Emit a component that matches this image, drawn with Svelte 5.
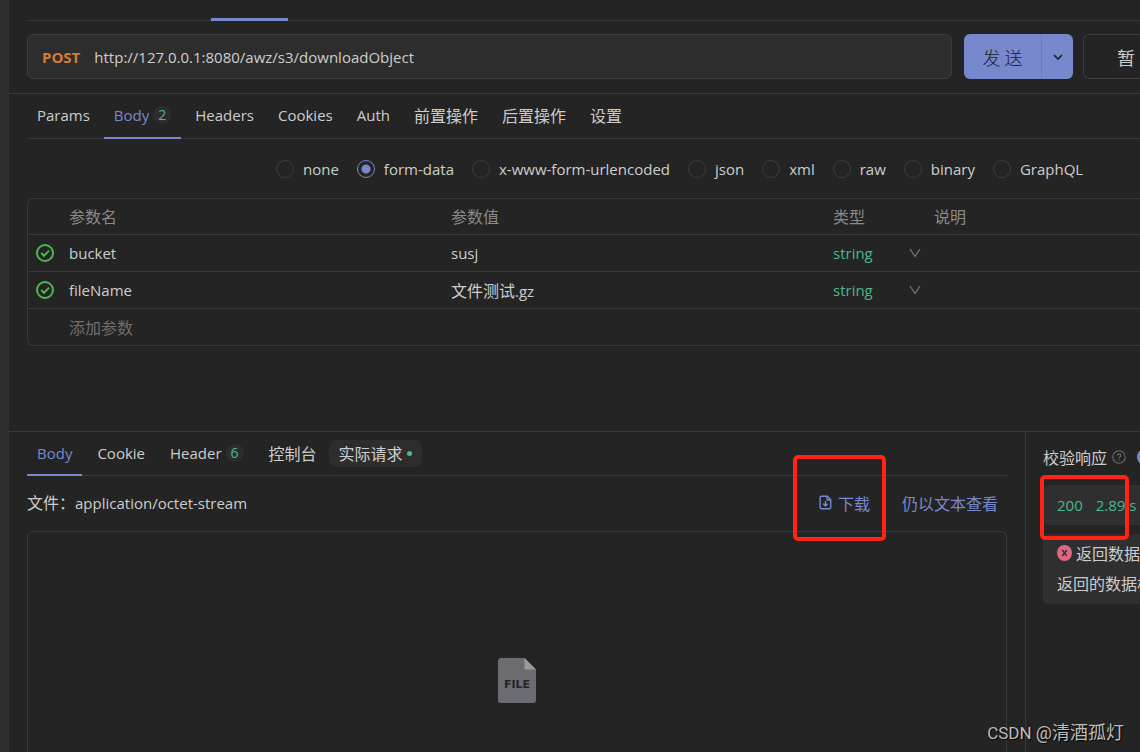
<script>
  const requestTabs = [
    { label: 'Params' },
    { label: 'Body', count: 2, active: true },
    { label: 'Headers' },
    { label: 'Cookies' },
    { label: 'Auth' },
    { label: '前置操作', han: true },
    { label: '后置操作', han: true },
    { label: '设置', han: true }
  ];
  const bodyTypes = ['none', 'form-data', 'x-www-form-urlencoded', 'json', 'xml', 'raw', 'binary', 'GraphQL'];
  let bodyType = $state('form-data');
  let url = $state('http://127.0.0.1:8080/awz/s3/downloadObject');
  const params = [
    { name: 'bucket', value: 'susj' },
    { name: 'fileName', han: '文件测试', value: '.gz' }
  ];
</script>

<div class="app">
  <div class="rail"></div>
  <main>
    <div class="doc-tabs"><span class="doc-active"></span></div>

    <form class="url-row" onsubmit={(e) => e.preventDefault()}>
      <label class="url-box">
        <b>POST</b>
        <input type="text" aria-label="URL" bind:value={url} />
      </label>
      <div class="actions">
        <div class="send">
          <button type="submit" class="send-main">发 送</button>
          <button type="button" class="send-more" aria-label="更多">
            <svg width="12" height="12" viewBox="0 0 12 12"><path d="M2 4l4 4 4-4" fill="none" stroke="currentColor" stroke-width="1.6" /></svg>
          </button>
        </div>
        <button type="button" class="stash">暂</button>
      </div>
    </form>

    <section class="request">
      <nav class="tabs">
        {#each requestTabs as tab}
          <button type="button" class="tab" class:active={tab.active} class:han={tab.han}>
            {tab.label}{#if tab.count}<span class="count">{tab.count}</span>{/if}
          </button>
        {/each}
      </nav>

      <div class="types">
        {#each bodyTypes as type}
          <label><input type="radio" name="body-type" value={type} bind:group={bodyType} />{type}</label>
        {/each}
      </div>

      <table>
        <thead>
          <tr>
            <th class="c-check"></th>
            <th class="c-wide">参数名</th>
            <th class="c-wide">参数值</th>
            <th class="c-type">类型</th>
            <th>说明</th>
          </tr>
        </thead>
        <tbody>
          {#each params as p}
            <tr>
              <td class="c-check">
                <svg width="18" height="18" viewBox="0 0 18 18" fill="none" stroke="#4fb552" stroke-width="2">
                  <circle cx="9" cy="9" r="8" />
                  <path d="M5.2 9l2.8 2.8 5-5.2" />
                </svg>
              </td>
              <td>{p.name}</td>
              <td>{#if p.han}<span class="han">{p.han}</span>{/if}{p.value}</td>
              <td>
                <div class="type">
                  <select aria-label="类型"><option>string</option></select>
                  <svg width="12" height="10" viewBox="0 0 12 10"><path d="M1 1l5 7.5L11 1" fill="none" stroke="#777" stroke-width="1.2" /></svg>
                </div>
              </td>
              <td></td>
            </tr>
          {/each}
          <tr>
            <td class="c-check"></td>
            <td colspan="4"><input class="add" type="text" aria-label="添加参数" placeholder="添加参数" /></td>
          </tr>
        </tbody>
      </table>
    </section>

    <div class="response">
      <section class="result">
        <nav class="tabs">
          <button type="button" class="tab active">Body</button>
          <button type="button" class="tab">Cookie</button>
          <button type="button" class="tab">Header<span class="count">6</span></button>
          <button type="button" class="tab han">控制台</button>
          <button type="button" class="tab han pill"><span>实际请求<i></i></span></button>
        </nav>
        <div class="file-row">
          <p><span class="han">文件：</span>application/octet-stream</p>
          <button type="button" class="link">
            <svg width="13" height="15" viewBox="0 0 14 16" fill="none" stroke="currentColor" stroke-width="1.5" stroke-linejoin="round">
              <path d="M3 1.2h6l3.7 3.9v7.9q0 1.8-1.8 1.8H3q-1.8 0-1.8-1.8V3Q1.200 1.200 3 1.200z" />
              <path d="M8.700 1.400v3.900h3.800" />
              <path d="M7 6.500v5M4.600 9.400L7 11.800l2.400-2.400" />
            </svg>下载
          </button>
          <button type="button" class="link">仍以文本查看</button>
        </div>
        <div class="preview">
          <svg width="38" height="46" viewBox="0 0 38 46">
            <path d="M3 0h23.500L38 11.500V42q0 3-3 3H3q-3 0-3-3V3Q0 0 3 0z" fill="#6b6c72" />
            <path d="M26.500 0L38 11.500H26.500z" fill="#9a9ba0" />
            <text x="19" y="30" text-anchor="middle">FILE</text>
          </svg>
        </div>
      </section>

      <aside>
        <div class="check-head">
          <span>校验响应</span>
          <svg width="14" height="14" viewBox="0 0 14 14" fill="none" stroke="#6a6a6a" stroke-width="1.1">
            <circle cx="7" cy="7" r="6.200" />
            <path d="M5.200 5.600c0-2.300 3.600-2.300 3.600 0 0 1.300-1.800 1.300-1.800 2.700M7 9.400v1.200" />
          </svg>
          <button type="button" class="switch" role="switch" aria-checked="true" aria-label="校验响应"></button>
        </div>
        <div class="card stats"><span>200</span><span>2.89 s</span></div>
        <div class="card notice">
          <p>
            <svg width="15" height="16" viewBox="0 0 15 16"><ellipse cx="7.500" cy="8" rx="7.500" ry="8" fill="#e06682" /><path d="M5.200 5l4.600 6M9.800 5l-4.600 6" stroke="#2d2d2d" stroke-width="1.300" /></svg>
            返回数据
          </p>
          <p>返回的数据格</p>
        </div>
      </aside>
    </div>
  </main>

  <div class="mark mark-download"></div>
  <div class="mark mark-status"></div>
  <div class="watermark">CSDN <span>@清酒孤灯</span></div>
</div>

<style>
  :global(body) { background: #242424; }
  .app {
    --line: #383838;
    --accent: #7788cc;
    --green: #48b98c;
    position: relative;
    display: flex;
    height: 100vh;
    overflow: hidden;
    background: #242424;
    color: #cdcdcd;
    font: 15px/24px "Open Sans", "Noto Sans CJK SC", sans-serif;
  }
  .app * { box-sizing: border-box; }
  button, input, select { font: inherit; color: inherit; background: none; border: 0; padding: 0; margin: 0; outline: none; }
  button { cursor: pointer; }
  p { margin: 0; }
  svg { display: block; flex: none; }
  .han, th, .add, .link, aside, .stash { font-family: "Noto Sans CJK SC", sans-serif; font-size: 16px; }

  .rail { flex: none; width: 9px; background: #2d2d2d; border-right: 1px solid #303030; }
  main { flex: 1; min-width: 0; display: flex; flex-direction: column; }

  .doc-tabs { flex: none; height: 21px; margin-left: 18px; padding-left: 184px; border-bottom: 1px solid var(--line); display: flex; align-items: flex-end; }
  .doc-active { width: 77px; height: 3px; margin-bottom: -1px; background: var(--accent); }

  .url-row { flex: none; display: flex; gap: 12px; padding: 13px 0 14px 18px; border-bottom: 1px solid var(--line); }
  .url-box { flex: 1; height: 45px; display: flex; align-items: center; gap: 14px; padding: 0 14px; background: #2d2d2d; border: 1px solid #3c3c3c; border-radius: 6px; }
  .url-box b { color: #d47b36; }
  .url-box input { flex: 1; min-width: 0; }
  .actions { display: flex; gap: 10px; }
  .send { display: flex; background: var(--accent); border-radius: 6px; color: #1e2130; }
  .send-main { width: 78px; font-size: 18px; font-family: "Noto Sans CJK SC", sans-serif; font-weight: 300; border-right: 1px solid #6b7bbd; }
  .send-more { width: 31px; display: flex; align-items: center; justify-content: center; }
  .stash { width: 57px; padding-left: 33px; text-align: left; font-size: 18px; border: 1px solid #3c3c3c; border-right: 0; border-radius: 6px 0 0 6px; }

  .request { flex: none; height: 337px; padding-left: 18px; }
  .tabs { display: flex; height: 45px; gap: 4px; border-bottom: 1px solid var(--line); }
  .tab { display: flex; align-items: center; height: 45px; padding: 0 10px 1px; border-bottom: 2px solid transparent; white-space: nowrap; }
  .request .tab { padding-bottom: 2px; }
  .tab.active { color: var(--accent); border-bottom-color: var(--accent); }
  .count { width: 18px; height: 18px; margin-left: 4px; border-radius: 9px; background: #2d2d2d; color: var(--green); font-size: 14px; line-height: 18px; text-align: center; }
  .tab.pill { padding: 0; margin-left: -3px; }
  .pill span { display: flex; align-items: center; gap: 4px; height: 27px; padding: 0 10px; border-radius: 8px; background: #2d2d2d; }
  .pill i { width: 5px; height: 5px; border-radius: 50%; background: var(--green); }

  .types { display: flex; gap: 18px; height: 59px; padding-left: 249px; align-items: center; white-space: nowrap; }
  .types label { display: flex; align-items: center; gap: 9px; }
  .types input { appearance: none; width: 18px; height: 18px; border: 1px solid #3c3c3c; border-radius: 50%; }
  .types input:checked { border-color: var(--accent); background: radial-gradient(circle, var(--accent) 4px, transparent 5px); }

  table { width: 100%; table-layout: fixed; border-collapse: separate; border-spacing: 0; border: 1px solid var(--line); border-right: 0; border-radius: 6px 0 0 6px; }
  th, td { height: 37px; padding: 0; text-align: left; border-bottom: 1px solid var(--line); }
  th { height: 36px; padding-bottom: 2px; font-weight: 400; color: #8a8a8a; }
  tbody tr:last-child td { border-bottom: 0; height: 36px; }
  .c-check { width: 41px; padding-left: 8px; }
  .c-wide { width: 382px; }
  .c-type { width: 101px; }
  .type { display: flex; align-items: center; }
  .type select { appearance: none; width: 76px; color: var(--green); }
  .add { display: block; }
  .add::placeholder { color: #6e6e6e; opacity: 1; }

  .response { flex: 1; min-height: 0; display: flex; border-top: 1px solid var(--line); }
  .result { flex: 1; min-width: 0; display: flex; flex-direction: column; padding: 0 18px; }
  .result .tabs { flex: none; height: 44px; gap: 5px; }
  .result .tab { height: 44px; padding-bottom: 0; }
  .file-row { flex: none; display: flex; align-items: center; height: 55px; gap: 32px; padding: 0 9px 2px 0; }
  .file-row p { flex: 1; }
  .link { display: flex; align-items: center; gap: 6px; color: var(--accent); }
  .preview { flex: 1; display: flex; justify-content: center; padding-top: 126px; border: 1px solid var(--line); border-bottom: 0; border-radius: 6px 6px 0 0; }
  .preview text { font: 700 11px "DejaVu Sans", sans-serif; fill: #242424; }

  aside { flex: none; width: 115px; padding: 13px 0 0 17px; border-left: 1px solid var(--line); overflow: hidden; white-space: nowrap; }
  .check-head { display: flex; align-items: center; gap: 5px; height: 24px; }
  .switch { flex: none; width: 32px; height: 16px; margin-left: 6px; border-radius: 8px; background: var(--accent); }
  .card { background: #2f2f2f; border-radius: 6px 0 0 6px; padding-left: 14px; }
  .stats { display: flex; align-items: center; gap: 13px; height: 40px; margin: 16px 0 9px; color: var(--green); font: 15px/24px "Open Sans", sans-serif; }
  .notice { height: 70px; padding-top: 4px; line-height: 30px; }
  .notice p { display: flex; align-items: center; gap: 4px; }

  .mark { position: absolute; border: 4px solid #ff2414; border-radius: 5px; }
  .mark-download { left: 793px; top: 455px; width: 93px; height: 86px; }
  .mark-status { left: 1040px; top: 475px; width: 89px; height: 65px; }
  .watermark { position: absolute; right: 16px; bottom: 7px; color: #bdbdbd; font: 17px/24px "Roboto", "Noto Sans CJK SC", sans-serif; text-shadow: 1px 1px 1px #000; }
  .watermark span { font-size: 18px; }
</style>
